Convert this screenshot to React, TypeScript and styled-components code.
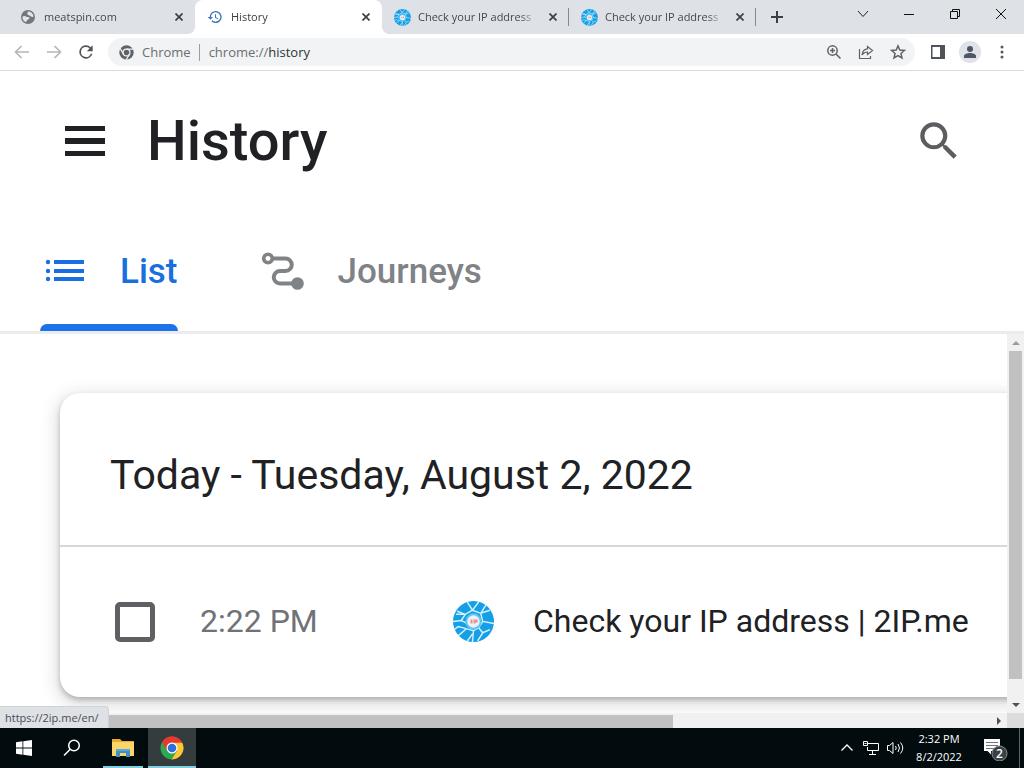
import React from 'react';
import styled, { createGlobalStyle } from 'styled-components';

const uiFont = '"Open Sans", "Noto Sans", sans-serif';
const pageFont = 'Roboto, "Liberation Sans", sans-serif';

const GlobalStyle = createGlobalStyle`
  * { box-sizing: border-box; }
  html, body, #root { height: 100%; }
  body { margin: 0; overflow: hidden; background: #fff; font-family: ${uiFont}; }
  svg { display: block; flex: none; }
  button { font: inherit; color: inherit; background: none; border: 0; padding: 0; cursor: pointer; }
`;

const Desktop = styled.div`
  display: flex;
  flex-direction: column;
  height: 100vh;
`;

/* Browser chrome */

const TabStrip = styled.header`
  display: flex;
  flex: none;
  height: 34px;
  padding-left: 8px;
  background: #dee1e6;
`;

const BrowserTabs = styled.div`
  display: flex;
  min-width: 0;
`;

const BrowserTab = styled.div<{ $active?: boolean; $divided?: boolean }>`
  display: flex;
  align-items: center;
  position: relative;
  width: 187px;
  padding: 0 8px 0 11px;
  border-radius: 8px 8px 0 0;
  background: ${(p) => (p.$active ? '#fff' : 'transparent')};
  color: ${(p) => (p.$active ? '#3c4043' : '#45494d')};

  &::before, &::after {
    content: ${(p) => (p.$active ? '""' : 'none')};
    position: absolute;
    bottom: 0;
    width: 8px;
    height: 8px;
  }
  &::before {
    left: -8px;
    background: radial-gradient(circle at 0 0, transparent 8px, #fff 8px);
  }
  &::after {
    content: ${(p) => (p.$active || p.$divided ? '""' : 'none')};
    right: ${(p) => (p.$divided ? '0' : '-8px')};
    ${(p) =>
      p.$divided
        ? 'bottom: 8px; width: 1px; height: 18px; background: #85898d;'
        : 'background: radial-gradient(circle at 100% 0, transparent 8px, #fff 8px);'}
  }
`;

const TabIcon = styled.span`
  display: grid;
  place-items: center;
  flex: none;
  width: 18px;
`;

const TabTitle = styled.span`
  flex: 1;
  min-width: 0;
  margin: 0 8px 0 7px;
  overflow: hidden;
  white-space: nowrap;
  font-size: 11px;
  line-height: 16px;
  mask-image: linear-gradient(to right, #000 86%, transparent);
`;

const IconButton = styled.button<{ $w: number; $h?: number }>`
  display: grid;
  place-items: center;
  flex: none;
  width: ${(p) => p.$w}px;
  height: ${(p) => p.$h ?? 28}px;
`;

const WindowControls = styled.div`
  display: flex;
  margin-left: auto;
`;

const Toolbar = styled.nav`
  display: flex;
  align-items: center;
  flex: none;
  height: 37px;
  padding: 0 6px;
  border-bottom: 1px solid #d9dbde;
  background: #fff;
`;

const AddressBar = styled.div`
  display: flex;
  align-items: center;
  flex: 1;
  min-width: 0;
  height: 28px;
  margin: 0 7px 0 6px;
  padding: 0 1px 0 11px;
  border-radius: 14px;
  background: #f1f3f4;
  color: #6a6e73;
  font-size: 13px;
`;

const SiteLabel = styled.label`
  margin-left: 8px;
  padding-right: 8px;
  border-right: 1px solid #9a9da1;
  line-height: 17px;
`;

const Scheme = styled.span`
  margin-left: 9px;
`;

const AddressInput = styled.input`
  flex: 1;
  min-width: 0;
  padding: 0;
  border: 0;
  outline: 0;
  background: none;
  color: #303338;
  font: inherit;
`;

const Avatar = styled.span`
  display: grid;
  place-items: center;
  width: 22px;
  height: 22px;
  border-radius: 50%;
  background: #dfe3e8;
`;

/* History page */

const Page = styled.div`
  display: flex;
  flex-direction: column;
  flex: 1;
  min-height: 0;
  position: relative;
  font-family: ${pageFont};
  color: #202124;
`;

const PageHeader = styled.header`
  display: flex;
  align-items: center;
  flex: none;
  height: 140px;
  padding: 0 60px;
`;

const PageTitle = styled.h1`
  flex: 1;
  margin: 0 0 0 37px;
  font-size: 56px;
  font-weight: 500;
  line-height: 64px;
`;

const PageTabs = styled.div`
  display: flex;
  flex: none;
  gap: 80px;
  height: 123px;
  padding: 0 40px;
  border-bottom: 3px solid #ececec;
`;

const PageTab = styled.button<{ $active?: boolean }>`
  display: flex;
  align-items: center;
  gap: 30px;
  position: relative;
  font-size: 35px;
  font-weight: 500;
  color: ${(p) => (p.$active ? '#1a6fe0' : '#808386')};

  &::after {
    content: ${(p) => (p.$active ? '""' : 'none')};
    position: absolute;
    left: 0;
    right: 0;
    bottom: 0;
    height: 7px;
    border-radius: 7px 7px 0 0;
    background: #1a73e8;
  }
`;

const ScrollArea = styled.div`
  display: grid;
  grid-template-columns: minmax(0, 1fr) 17px;
  grid-template-rows: minmax(0, 1fr) 15px;
  flex: 1;
  min-height: 0;
`;

const Content = styled.main`
  overflow: hidden;
  padding: 59px 0 0 60px;
`;

const Card = styled.section`
  width: 1400px;
  border-radius: 20px;
  background: #fff;
  box-shadow: 0 3px 5px rgba(60, 64, 67, 0.3), 0 5px 15px 5px rgba(60, 64, 67, 0.15);
`;

const CardTitle = styled.h2`
  height: 154px;
  margin: 0;
  padding: 6px 50px 0;
  border-bottom: 2px solid #d6d7d9;
  font-size: 41px;
  font-weight: 400;
  line-height: 152px;
`;

const HistoryRow = styled.div`
  display: flex;
  align-items: center;
  height: 150px;
  padding-left: 55px;
  font-size: 32px;
  line-height: 38px;
`;

const Checkbox = styled.input`
  appearance: none;
  flex: none;
  width: 40px;
  height: 40px;
  margin: 0;
  border: 5px solid #5f6064;
  border-radius: 5px;
`;

const VisitTime = styled.label`
  width: 252px;
  padding: 0 0 2px 45px;
  color: #6f7276;
`;

const VisitLink = styled.a`
  display: flex;
  align-items: center;
  margin-left: 46px;
  padding-bottom: 2px;
  gap: 39px;
  color: inherit;
  text-decoration: none;
  white-space: nowrap;
`;

const ScrollV = styled.div`
  display: flex;
  flex-direction: column;
  align-items: center;
  background: #f1f1f1;
`;

const ScrollH = styled.div`
  display: flex;
  align-items: center;
  background: #f1f1f1;
`;

const TrackV = styled.div`
  flex: 1;
  width: 13px;
`;

const ThumbV = styled.div`
  height: 95%;
  background: #c1c1c1;
`;

const ThumbH = styled.div`
  align-self: flex-end;
  width: 66%;
  height: 13px;
  margin-left: 8px;
  background: #c1c1c1;
`;

const Corner = styled.div`
  background: #dcdcdc;
`;

const StatusBubble = styled.div`
  position: absolute;
  left: 0;
  bottom: 0;
  padding: 2px 9px 2px 5px;
  border-top: 1px solid #cfd2d6;
  border-right: 1px solid #cfd2d6;
  border-radius: 0 4px 0 0;
  background: #dee1e6;
  color: #4a4d52;
  font-family: ${uiFont};
  font-size: 11px;
  line-height: 17px;
`;

/* Taskbar */

const Taskbar = styled.footer`
  display: flex;
  flex: none;
  height: 40px;
  background: #020c0f;
  color: #fff;
`;

const TaskButton = styled.button<{ $open?: boolean; $active?: boolean }>`
  display: grid;
  place-items: center;
  width: ${(p) => (p.$open && !p.$active ? 40 : 48)}px;
  margin-left: ${(p) => (p.$active ? 5 : p.$open ? 7 : 0)}px;
  background: ${(p) => (p.$active ? '#343c3d' : 'transparent')};
  box-shadow: ${(p) => (p.$open ? 'inset 0 -2px #7fcfe0' : 'none')};
`;

const Tray = styled.div`
  display: flex;
  align-items: center;
  margin-left: auto;
`;

const Clock = styled.time`
  width: 64px;
  font-size: 11px;
  line-height: 18px;
  text-align: center;
`;

const ShowDesktop = styled.button`
  width: 5px;
  height: 40px;
  border-left: 1px solid #5b6365;
`;

/* Icons */

const GlobeIcon = () => (
  <svg width="16" height="16" viewBox="0 0 16 16">
    <circle cx="8" cy="8" r="7" fill="#74777b" />
    <path d="M2.5 7.5C5 6 6 8 8 8c2.200 .2 1.500 2.200 0 2.500-1.500.4-1 2.500-2.500 2.500C4 12.500 2.200 10.500 2.500 7.500Z" fill="#e2e5e9" />
    <path d="M8 2.500c3 0 5.300 2.200 5.500 5C12 9 11 7 9.500 6.500 8 6 6.500 5.500 8 2.500Z" fill="#e2e5e9" />
  </svg>
);

const HistoryIcon = () => (
  <svg width="16" height="16" viewBox="0 0 24 24" fill="#3b74bd">
    <path d="M13 3a9 9 0 0 0-9 9H1l3.890 3.890.070.140L9 12H6a7 7 0 1 1 2.060 4.940l-1.420 1.420A9 9 0 1 0 13 3Zm-1 5v5l4.280 2.540.720-1.210-3.500-2.080V8H12Z" />
  </svg>
);

const IpIcon = ({ size }: { size: number }) => (
  <svg width={size} height={size} viewBox="0 0 40 40">
    <circle cx="20" cy="20" r="20" fill="#169fe6" />
    <g fill="none" stroke="#d3f3ff" strokeWidth="1.400">
      <path d="M14 1l5 8 6-8M19 9l-7 4-8-3M12 13l-4 6-8 1M8 19l6 3M19 9l8 3 9-3M27 12l2 8 11 2M29 20l-4 6 4 5 7-3M29 31l-5 8M25 26l-5 3-1 11M20 29l-7-2-8 7M13 27l-8-2-4 3M3 13l9 0M32 4l-5 8M14 39l5-7" />
    </g>
    <circle cx="20" cy="20" r="8" fill="#62c4f1" />
    <circle cx="20" cy="20" r="6" fill="#eaf3fa" />
    <path d="M17 18h2v4h-2zM20 18h4v3h-2v1h-2z" fill="#e8948c" />
  </svg>
);

const CloseIcon = () => (
  <svg width="8" height="8" viewBox="0 0 8 8" stroke="#3c4043" strokeWidth="1.700">
    <path d="M.5.5l7 7M7.500.5l-7 7" />
  </svg>
);

const ArrowIcon = ({ forward }: { forward?: boolean }) => (
  <svg width="16" height="16" viewBox="0 0 16 16" fill="none" stroke="#b4b7bb" strokeWidth="1.700">
    <path d={forward ? 'M1 8h13M8.500 2l6 6-6 6' : 'M15 8H2M7.500 2l-6 6 6 6'} />
  </svg>
);

const ReloadIcon = () => (
  <svg width="20" height="20" viewBox="0 0 24 24" fill="#4f5357">
    <path d="M17.650 6.350A8 8 0 1 0 19.730 14h-2.080A6 6 0 1 1 12 6c1.660 0 3.140.690 4.220 1.780L13 11h7V4l-2.350 2.350Z" />
  </svg>
);

const ChromeMono = () => (
  <svg width="15" height="15" viewBox="0 0 24 24">
    <circle cx="12" cy="12" r="11.500" fill="#5f6368" />
    <g fill="none" stroke="#f1f3f4" strokeWidth="2">
      <circle cx="12" cy="12" r="5.500" />
      <path d="M12 6.500h11M7.200 14.700L1.800 5.500M16.800 14.700L11.300 24" />
    </g>
  </svg>
);

const ChromeColor = () => (
  <svg width="24" height="24" viewBox="0 0 24 24">
    <path d="M12 12L2 6.200A11.500 11.500 0 0 1 22 6.200Z" fill="#e33b2e" />
    <path d="M12 12L2 6.200A11.500 11.500 0 0 0 11.500 23.500L17 14.800Z" fill="#2da94f" />
    <path d="M12 6.500h10.100A11.500 11.500 0 0 1 11.500 23.500L17 14.800Z" fill="#fcc934" />
    <path d="M12 6.500h10.100L21 4.800A11.500 11.500 0 0 0 2 6.200L7.200 15Z" fill="#e33b2e" />
    <circle cx="12" cy="12" r="5.500" fill="#fff" />
    <circle cx="12" cy="12" r="4.300" fill="#2d6fe0" />
  </svg>
);

const ZoomIcon = () => (
  <svg width="16" height="16" viewBox="0 0 16 16" fill="none" stroke="#5f6368" strokeWidth="1.500">
    <circle cx="6.500" cy="6.500" r="4.700" />
    <path d="M10 10l4.500 4.500M4 6.500h5M6.500 4v5" />
  </svg>
);

const ShareIcon = () => (
  <svg width="16" height="16" viewBox="0 0 16 16" fill="none" stroke="#5f6368" strokeWidth="1.200">
    <path d="M1.500 5v9.500h11V12M9.500 2.500v2.400C6 5.200 4.500 7.500 4 11c1.500-2.200 3-3 5.500-3v2.500l5-4-5-4Z" />
  </svg>
);

const StarIcon = () => (
  <svg width="16" height="16" viewBox="0 0 24 24" fill="none" stroke="#5f6368" strokeWidth="2.200">
    <path d="M12 2.800l2.700 6.300 6.900.6-5.200 4.500 1.600 6.700-6-3.600-6 3.600 1.600-6.700-5.200-4.500 6.900-.6Z" />
  </svg>
);

const SidePanelIcon = () => (
  <svg width="14" height="14" viewBox="0 0 14 14">
    <path d="M0 0h14v14H0ZM1.500 2v10H9V2Z" fill="#505357" fillRule="evenodd" />
  </svg>
);

const PersonIcon = () => (
  <svg width="12" height="12" viewBox="0 0 12 12" fill="#4d5566">
    <circle cx="6" cy="3" r="3" />
    <path d="M0 12V10c0-2 3.500-3 6-3s6 1 6 3v2Z" />
  </svg>
);

const DotsIcon = () => (
  <svg width="4" height="14" viewBox="0 0 4 14" fill="#54585c">
    <circle cx="2" cy="2" r="1.500" />
    <circle cx="2" cy="7" r="1.500" />
    <circle cx="2" cy="12" r="1.500" />
  </svg>
);

const MenuIcon = () => (
  <svg width="50" height="50" viewBox="0 0 50 50" fill="#202124">
    <path d="M5 10h40v5H5zM5 22h40v6H5zM5 35h40v5H5z" />
  </svg>
);

const SearchIcon = () => (
  <svg width="50" height="50" viewBox="0 0 24 24" fill="#5c5d60">
    <path d="M15.500 14h-.790l-.280-.270A6.470 6.470 0 0 0 16 9.500 6.500 6.500 0 1 0 9.500 16c1.610 0 3.090-.590 4.230-1.570l.270.280v.790l5 4.990L20.490 19l-4.990-5Zm-6 0a4.500 4.500 0 1 1 0-9 4.500 4.500 0 0 1 0 9Z" />
  </svg>
);

const ListIcon = () => (
  <svg width="50" height="50" viewBox="0 0 50 50" fill="#1a6fe0">
    <path d="M14 14h30v4H14zM14 23h30v4H14zM14 31h30v4H14z" />
    <circle cx="8" cy="16" r="2.200" />
    <circle cx="8" cy="25" r="2.200" />
    <circle cx="8" cy="33" r="2.200" />
  </svg>
);

const JourneysIcon = () => (
  <svg width="50" height="50" viewBox="0 0 50 50" fill="none" stroke="#808386" strokeWidth="4">
    <circle cx="10" cy="12.500" r="4.300" strokeWidth="3.600" />
    <path d="M15 12.500h12.500a6.200 6.200 0 0 1 0 12.500h-5.500a6.200 6.200 0 0 0 0 12.500h14" />
    <circle cx="39.500" cy="37.500" r="6.300" fill="#808386" stroke="none" />
  </svg>
);

const Triangle = ({ turn }: { turn: 'up' | 'down' | 'right' }) => {
  const shapes = { up: 'M1 7l4-4 4 4z', down: 'M1 3l4 4 4-4z', right: 'M3 1l4 4-4 4z' };
  return (
    <svg width="10" height="10" viewBox="0 0 10 10" fill={turn === 'up' ? '#9b9b9b' : '#505050'}>
      <path d={shapes[turn]} />
    </svg>
  );
};

const WindowsIcon = () => (
  <svg width="16" height="16" viewBox="0 0 16 16" fill="#fff">
    <path d="M0 2.200L6.500 1.300V7.500H0ZM7.300 1.200L16 0v7.500H7.300ZM0 8.500h6.500v6.200L0 13.800ZM7.300 8.500H16V16l-8.700-1.200Z" />
  </svg>
);

const FolderIcon = () => (
  <svg width="22" height="20" viewBox="0 0 22 20">
    <path d="M0 1h8l2 2h12v15H0Z" fill="#e8a92d" />
    <path d="M0 4h22v14H0Z" fill="#fbd568" />
    <path d="M4 11h14v8h-4v-4H8v4H4Z" fill="#3f8fc9" />
    <path d="M4 11h14v2H4Z" fill="#58a8dc" />
  </svg>
);

const tabs = [
  { title: 'meatspin.com', icon: <GlobeIcon /> },
  { title: 'History', icon: <HistoryIcon />, active: true },
  { title: 'Check your IP address', icon: <IpIcon size={17} />, divided: true },
  { title: 'Check your IP address', icon: <IpIcon size={17} />, divided: true },
];

export default function App() {
  return (
    <Desktop>
      <GlobalStyle />
      <TabStrip>
        <BrowserTabs>
          {tabs.map((tab, i) => (
            <BrowserTab key={i} $active={tab.active} $divided={tab.divided}>
              <TabIcon>{tab.icon}</TabIcon>
              <TabTitle>{tab.title}</TabTitle>
              <IconButton $w={16} aria-label="Close tab"><CloseIcon /></IconButton>
            </BrowserTab>
          ))}
        </BrowserTabs>
        <IconButton $w={42} $h={34} aria-label="New tab">
          <svg width="12" height="12" viewBox="0 0 12 12" stroke="#3c4043" strokeWidth="2"><path d="M6 0v12M0 6h12" /></svg>
        </IconButton>
        <WindowControls>
          <IconButton $w={46} aria-label="Search tabs">
            <svg width="12" height="12" viewBox="0 0 12 12" fill="none" stroke="#222"><path d="M1 3l5 5.500L11 3" /></svg>
          </IconButton>
          <IconButton $w={46} aria-label="Minimize">
            <svg width="10" height="10" viewBox="0 0 10 10" fill="#111"><path d="M0 5h10v1H0z" /></svg>
          </IconButton>
          <IconButton $w={46} aria-label="Restore">
            <svg width="10" height="10" viewBox="0 0 10 10" fill="none" stroke="#111"><path d="M.5 2.500h7v7h-7zM2.500 2V.5h7v7H8" /></svg>
          </IconButton>
          <IconButton $w={46} aria-label="Close">
            <svg width="12" height="12" viewBox="0 0 12 12" stroke="#111"><path d="M1 1l10 10M11 1L1 11" /></svg>
          </IconButton>
        </WindowControls>
      </TabStrip>

      <Toolbar>
        <IconButton $w={32} aria-label="Back"><ArrowIcon /></IconButton>
        <IconButton $w={32} aria-label="Forward"><ArrowIcon forward /></IconButton>
        <IconButton $w={32} aria-label="Reload"><ReloadIcon /></IconButton>
        <AddressBar>
          <ChromeMono />
          <SiteLabel htmlFor="address">Chrome</SiteLabel>
          <Scheme>chrome://</Scheme>
          <AddressInput id="address" defaultValue="history" />
          <IconButton $w={32} aria-label="Zoom"><ZoomIcon /></IconButton>
          <IconButton $w={32} aria-label="Share"><ShareIcon /></IconButton>
          <IconButton $w={32} aria-label="Bookmark"><StarIcon /></IconButton>
        </AddressBar>
        <IconButton $w={32} aria-label="Side panel"><SidePanelIcon /></IconButton>
        <IconButton $w={32} aria-label="Profile"><Avatar><PersonIcon /></Avatar></IconButton>
        <IconButton $w={32} aria-label="Menu"><DotsIcon /></IconButton>
      </Toolbar>

      <Page>
        <PageHeader>
          <IconButton $w={50} $h={50} aria-label="Main menu"><MenuIcon /></IconButton>
          <PageTitle>History</PageTitle>
          <IconButton $w={50} $h={50} aria-label="Search history"><SearchIcon /></IconButton>
        </PageHeader>
        <PageTabs role="tablist">
          <PageTab role="tab" aria-selected="true" $active><ListIcon />List</PageTab>
          <PageTab role="tab" aria-selected="false"><JourneysIcon />Journeys</PageTab>
        </PageTabs>
        <ScrollArea>
          <Content>
            <Card>
              <CardTitle>Today - Tuesday, August 2, 2022</CardTitle>
              <HistoryRow>
                <Checkbox type="checkbox" id="visit" />
                <VisitTime htmlFor="visit">2:22 PM</VisitTime>
                <VisitLink href="https://2ip.me/en/"><IpIcon size={41} />Check your IP address | 2IP.me</VisitLink>
              </HistoryRow>
            </Card>
          </Content>
          <ScrollV>
            <IconButton $w={17} $h={17} aria-label="Scroll up"><Triangle turn="up" /></IconButton>
            <TrackV><ThumbV /></TrackV>
            <IconButton $w={17} $h={17} aria-label="Scroll down"><Triangle turn="down" /></IconButton>
          </ScrollV>
          <ScrollH>
            <ThumbH />
            <WindowControls>
              <IconButton $w={17} $h={15} aria-label="Scroll right"><Triangle turn="right" /></IconButton>
            </WindowControls>
          </ScrollH>
          <Corner />
        </ScrollArea>
        <StatusBubble>https://2ip.me/en/</StatusBubble>
      </Page>

      <Taskbar>
        <TaskButton aria-label="Start"><WindowsIcon /></TaskButton>
        <TaskButton aria-label="Search">
          <svg width="18" height="18" viewBox="0 0 18 18" fill="none" stroke="#fff" strokeWidth="1.500">
            <circle cx="11" cy="6.500" r="5.300" /><path d="M7.200 10.300L1 16.500" />
          </svg>
        </TaskButton>
        <TaskButton $open aria-label="File Explorer"><FolderIcon /></TaskButton>
        <TaskButton $open $active aria-label="Google Chrome"><ChromeColor /></TaskButton>
        <Tray>
          <IconButton $w={24} aria-label="Show hidden icons">
            <svg width="12" height="12" viewBox="0 0 12 12" fill="none" stroke="#fff" strokeWidth="1.300"><path d="M.5 8.500L6 3l5.500 5.500" /></svg>
          </IconButton>
          <IconButton $w={24} aria-label="Network">
            <svg width="16" height="14" viewBox="0 0 16 14" fill="none" stroke="#fff">
              <path d="M5 2.500h10.500v7h-11V6M9.500 10v3M6 13.500h7M.5.500h4v4h-4zM1.500 2.500h2" />
            </svg>
          </IconButton>
          <IconButton $w={24} aria-label="Volume">
            <svg width="17" height="14" viewBox="0 0 17 14" fill="none" stroke="#fff">
              <path d="M.5 4.500h2l3.500-3v11l-3.500-3h-2zM8.500 5q1.500 2 0 4M11 3q3 4 0 8M13.500 1.500q4.500 5.500 0 11" />
            </svg>
          </IconButton>
          <Clock>2:32 PM<br />8/2/2022</Clock>
          <IconButton $w={48} $h={40} aria-label="2 notifications">
            <svg width="26" height="26" viewBox="0 0 26 26">
              <path d="M2 4h16v12H9v3.500L5.500 16H2Z" fill="#fff" />
              <path d="M4 7.500h12M4 10.500h12M4 13.500h8" stroke="#6d7577" />
              <circle cx="17.500" cy="18.500" r="7.500" fill="#3a4143" stroke="#8b9092" />
              <text x="17.500" y="23" fill="#fff" fontSize="12" fontWeight="600" textAnchor="middle">2</text>
            </svg>
          </IconButton>
          <ShowDesktop aria-label="Show desktop" />
        </Tray>
      </Taskbar>
    </Desktop>
  );
}
